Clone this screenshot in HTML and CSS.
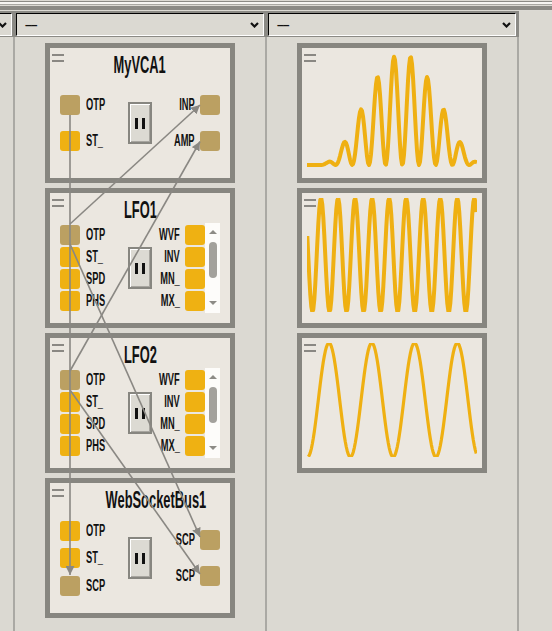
FILE: index.html
```html
<!DOCTYPE html>
<html>
<head>
<meta charset="utf-8">
<link rel="stylesheet" href="styles.css">
</head>
<body>
<div class="topbar"></div>
<div class="columns">
  <section class="col col-first">
    <div class="col-head">
      <div class="select"><span class="sel-text"></span><svg class="chev" width="9" height="6" viewBox="0 0 9 6"><path d="M1 1 L4.5 4.5 L8 1" /></svg></div>
    </div>
    <div class="col-body"></div>
  </section>

  <section class="col">
    <div class="col-head">
      <div class="select"><span class="sel-text">––</span><svg class="chev" width="9" height="6" viewBox="0 0 9 6"><path d="M1 1 L4.5 4.5 L8 1" /></svg></div>
    </div>
    <div class="col-body">
      <div class="module">
        <div class="mod-head"><span class="handle"></span><span class="title"><span class="sq">MyVCA1</span></span></div>
        <div class="ports">
          <div class="pcol left">
            <div class="port"><span class="jack on"></span><span class="lbl">OTP</span></div>
            <div class="port"><span class="jack"></span><span class="lbl">ST_</span></div>
          </div>
          <div class="pause"><span></span><span></span></div>
          <div class="pcol right">
            <div class="port"><span class="lbl">INP</span><span class="jack on"></span></div>
            <div class="port"><span class="lbl">AMP</span><span class="jack on"></span></div>
          </div>
        </div>
      </div>

      <div class="module">
        <div class="mod-head"><span class="handle"></span><span class="title"><span class="sq">LFO1</span></span></div>
        <div class="ports">
          <div class="pcol left">
            <div class="port"><span class="jack on"></span><span class="lbl">OTP</span></div>
            <div class="port"><span class="jack"></span><span class="lbl">ST_</span></div>
            <div class="port"><span class="jack"></span><span class="lbl">SPD</span></div>
            <div class="port"><span class="jack"></span><span class="lbl">PHS</span></div>
          </div>
          <div class="pause"><span></span><span></span></div>
          <div class="plist">
            <div class="pcol right">
              <div class="port"><span class="lbl">WVF</span><span class="jack"></span></div>
              <div class="port"><span class="lbl">INV</span><span class="jack"></span></div>
              <div class="port"><span class="lbl">MN_</span><span class="jack"></span></div>
              <div class="port"><span class="lbl">MX_</span><span class="jack"></span></div>
            </div>
            <div class="scroll"><span class="arr-up"></span><span class="thumb"></span><span class="arr-dn"></span></div>
          </div>
        </div>
      </div>

      <div class="module">
        <div class="mod-head"><span class="handle"></span><span class="title"><span class="sq">LFO2</span></span></div>
        <div class="ports">
          <div class="pcol left">
            <div class="port"><span class="jack on"></span><span class="lbl">OTP</span></div>
            <div class="port"><span class="jack"></span><span class="lbl">ST_</span></div>
            <div class="port"><span class="jack"></span><span class="lbl">SPD</span></div>
            <div class="port"><span class="jack"></span><span class="lbl">PHS</span></div>
          </div>
          <div class="pause"><span></span><span></span></div>
          <div class="plist">
            <div class="pcol right">
              <div class="port"><span class="lbl">WVF</span><span class="jack"></span></div>
              <div class="port"><span class="lbl">INV</span><span class="jack"></span></div>
              <div class="port"><span class="lbl">MN_</span><span class="jack"></span></div>
              <div class="port"><span class="lbl">MX_</span><span class="jack"></span></div>
            </div>
            <div class="scroll"><span class="arr-up"></span><span class="thumb"></span><span class="arr-dn"></span></div>
          </div>
        </div>
      </div>

      <div class="module">
        <div class="mod-head"><span class="handle"></span><span class="title"><span class="sq">WebSocketBus1</span></span></div>
        <div class="ports">
          <div class="pcol left">
            <div class="port"><span class="jack"></span><span class="lbl">OTP</span></div>
            <div class="port"><span class="jack"></span><span class="lbl">ST_</span></div>
            <div class="port"><span class="jack on"></span><span class="lbl">SCP</span></div>
          </div>
          <div class="pause"><span></span><span></span></div>
          <div class="pcol right">
            <div class="port"><span class="lbl">SCP</span><span class="jack on"></span></div>
            <div class="port"><span class="lbl">SCP</span><span class="jack on"></span></div>
          </div>
        </div>
      </div>
    </div>
  </section>

  <section class="col">
    <div class="col-head">
      <div class="select"><span class="sel-text">––</span><svg class="chev" width="9" height="6" viewBox="0 0 9 6"><path d="M1 1 L4.5 4.5 L8 1" /></svg></div>
    </div>
    <div class="col-body">
      <div class="module scope">
        <span class="handle"></span>
        <svg class="plot" width="170" height="114" viewBox="0 0 170 114"><polyline id="w1" class="wave" points="" /></svg>
      </div>
      <div class="module scope">
        <span class="handle"></span>
        <svg class="plot" width="170" height="114" viewBox="0 0 170 114"><polyline id="w2" class="wave" points="" /></svg>
      </div>
      <div class="module scope">
        <span class="handle"></span>
        <svg class="plot" width="170" height="114" viewBox="0 0 170 114"><polyline id="w3" class="wave thin" points="" /></svg>
      </div>
    </div>
  </section>
</div>

<svg class="wires" width="552" height="631" viewBox="0 0 552 631">
  <defs>
    <marker id="arrow" markerUnits="userSpaceOnUse" markerWidth="10" markerHeight="9" refX="9" refY="4.5" orient="auto">
      <path d="M0 0 L9 4.5 L0 9 Z" class="arrowhead" />
    </marker>
  </defs>
  <line x1="70" y1="115" x2="70" y2="575" marker-end="url(#arrow)" />
  <line x1="70" y1="224" x2="200" y2="105" marker-end="url(#arrow)" />
  <line x1="70" y1="371" x2="200" y2="141.5" marker-end="url(#arrow)" />
  <line x1="70" y1="244" x2="200" y2="537" marker-end="url(#arrow)" />
  <line x1="70" y1="390" x2="200" y2="574" marker-end="url(#arrow)" />
</svg>
<script src="script.js"></script>
</body>
</html>
```

FILE: styles.css
```css
* { box-sizing: border-box; }
html, body { margin: 0; padding: 0; }
body {
  width: 552px;
  height: 631px;
  overflow: hidden;
  position: relative;
  background: #dbd9d2;
  font-family: "Liberation Sans", Arial, sans-serif;
  color: #111;
}
.topbar {
  height: 11px;
  background: linear-gradient(to bottom,
    #dcdad4 0 1px, #8b8a85 1px 2px, #f6f5f2 2px 4px, #a9a8a3 4px 5px,
    #dcdad4 5px 6px, #8b8a85 6px 10px, #dcdad4 10px 11px);
}
.columns {
  display: flex;
  height: 620px;
  margin-left: -237px;
}
.col {
  flex: 0 0 252px;
  display: flex;
  flex-direction: column;
}
.col-head {
  background: #8b8a85;
  padding: 2px 3px 1px 1px;
}
.select {
  height: 23px;
  background: #dbd9d2;
  border-top: 1px solid #000;
  border-left: 1px solid #000;
  border-bottom: 1px solid #fff;
  border-right: 1px solid #fff;
  display: flex;
  align-items: center;
  justify-content: space-between;
  padding: 0 4px 0 8px;
}
.sel-text {
  font-size: 12px;
  font-weight: bold;
  letter-spacing: -1px;
}
.chev path {
  fill: none;
  stroke: #111;
  stroke-width: 2.2;
}
.col-body {
  flex: 1;
  width: 252px;
  border-right: 2px solid #aaa9a4;
  padding: 6px 30px 0;
  display: flex;
  flex-direction: column;
  gap: 5px;
}
.module {
  flex: none;
  width: 190px;
  height: 140px;
  border: 5px solid #878680;
  background: #ebe7e0;
  position: relative;
}
.mod-head {
  height: 30px;
  display: grid;
  grid-template-columns: 16px 1fr 16px;
}
.handle {
  display: block;
  margin: 6px 0 0 2px;
  width: 12px;
  height: 8px;
  border-top: 2px solid #8a8883;
  border-bottom: 2px solid #8a8883;
}
.scope .handle {
  position: absolute;
  top: 0;
  left: 0;
}
.title {
  grid-column: 2;
  text-align: center;
  font-size: 23px;
  font-weight: bold;
  line-height: 24px;
  padding-top: 5px;
  white-space: nowrap;
}
.title .sq {
  display: inline-block;
  transform: scaleX(0.56);
}
.ports {
  height: 90px;
  display: grid;
  grid-template-columns: minmax(0, 1fr) 24px minmax(0, 1fr);
  align-items: center;
  padding: 0 10px;
}
.pcol {
  height: 90px;
  display: flex;
  flex-direction: column;
  justify-content: space-evenly;
}
.port {
  display: flex;
  align-items: center;
  gap: 6px;
  height: 20px;
}
.right .port {
  justify-content: flex-end;
  gap: 5px;
}
.jack {
  flex: none;
  width: 20px;
  height: 20px;
  border-radius: 3px;
  background: #efb112;
}
.jack.on { background: #bba062; }
.lbl {
  display: inline-block;
  font-size: 16px;
  font-weight: bold;
  line-height: 1;
  white-space: nowrap;
  transform: scaleX(0.58);
  transform-origin: left center;
}
.right .lbl { transform-origin: right center; }
.pause {
  width: 24px;
  height: 42px;
  border: 2px solid #878680;
  background: #dcdad3;
  box-shadow: inset 1px 1px 0 #fff, inset -1px -1px 0 #a8a6a0;
  display: flex;
  justify-content: center;
  align-items: center;
  gap: 4px;
}
.pause span {
  width: 3px;
  height: 11px;
  background: #111;
}
.plist {
  height: 90px;
  display: flex;
  justify-content: flex-end;
}
.plist .pcol { flex: none; }
.scroll {
  flex: none;
  width: 15px;
  height: 90px;
  background: #fdfcfa;
  display: flex;
  flex-direction: column;
  align-items: center;
  padding-top: 7px;
}
.arr-up {
  width: 0; height: 0;
  border-left: 4px solid transparent;
  border-right: 4px solid transparent;
  border-bottom: 4px solid #8d8b86;
}
.thumb {
  width: 8px;
  height: 36px;
  border-radius: 4px;
  background: #a3a19c;
  margin-top: 8px;
}
.arr-dn {
  width: 0; height: 0;
  margin-top: 23px;
  border-left: 4px solid transparent;
  border-right: 4px solid transparent;
  border-top: 4px solid #8d8b86;
}
.plot {
  display: block;
  margin: 5px;
  overflow: hidden;
}
.wave {
  fill: none;
  stroke: #efb012;
  stroke-width: 4;
  stroke-linejoin: round;
}
.wave.thin { stroke-width: 3.2; }
.wires {
  position: absolute;
  left: 0;
  top: 0;
  pointer-events: none;
}
.wires line {
  stroke: #8a8883;
  stroke-width: 1.6;
}
.arrowhead { fill: #8a8883; }
```

FILE: script.js
```js
(function () {
  function draw(id, x0, x1, f) {
    var pts = [];
    for (var x = x0; x <= x1 + 0.001; x += 1) {
      pts.push(x.toFixed(1) + ',' + f(x).toFixed(1));
    }
    document.getElementById(id).setAttribute('points', pts.join(' '));
  }
  // VCA output: LFO1 carrier under a window envelope
  draw('w1', 0, 170, function (x) {
    var X = x + 307;
    var d = X - 402.3;
    var env = Math.abs(d) < 83 ? Math.pow(Math.cos(Math.PI * d / 166), 2) : 0;
    var car = (1 + Math.cos(2 * Math.PI * (X - 394) / 16.7)) / 2;
    return 112 - 111 * env * car;
  });
  // LFO1
  draw('w2', 0.3, 169.3, function (x) {
    return 57 - 57 * Math.cos(2 * Math.PI * (x - 14) / 17.04);
  });
  // LFO2
  draw('w3', 1.3, 169.3, function (x) {
    return 57 - 57 * Math.cos(2 * Math.PI * (x - 22) / 42.77);
  });
})();
```
